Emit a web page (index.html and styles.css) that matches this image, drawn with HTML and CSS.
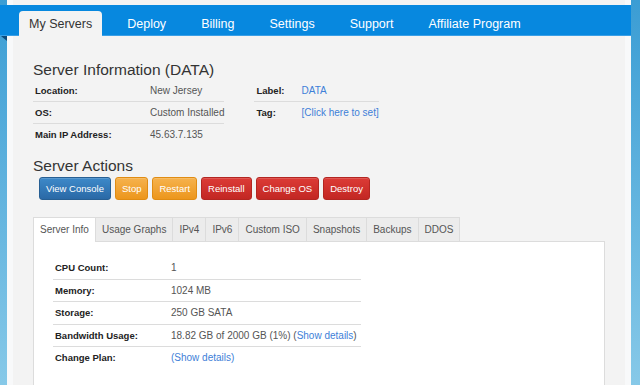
FILE: index.html
```html
<!DOCTYPE html>
<html lang="en">
<head>
    <meta charset="UTF-8">
    <title>My Servers</title>
    <link rel="stylesheet" href="styles.css">
</head>
<body>
<div class="panel">
    <div class="nav">
        <ul class="nav-list">
            <li class="nav-item nav-item-active">My Servers</li>
            <li class="nav-item">Deploy</li>
            <li class="nav-item">Billing</li>
            <li class="nav-item">Settings</li>
            <li class="nav-item">Support</li>
            <li class="nav-item">Affiliate Program</li>
        </ul>
    </div>
    <div class="main">
        <h2 class="section-title">Server Information (DATA)</h2>
        <div class="info">
            <table class="info-table">
                <tr><td class="label">Location:</td><td class="value">New Jersey</td></tr>
                <tr><td class="label">OS:</td><td class="value">Custom Installed</td></tr>
                <tr><td class="label">Main IP Address:</td><td class="value">45.63.7.135</td></tr>
            </table>
            <table class="info-table info-table-right">
                <tr><td class="label">Label:</td><td class="value"><a class="link">DATA</a></td></tr>
                <tr><td class="label">Tag:</td><td class="value"><a class="link">[Click here to set]</a></td></tr>
            </table>
        </div>

        <h2 class="section-title section-title-actions">Server Actions</h2>
        <div class="actions">
            <button class="btn btn-primary">View Console</button>
            <button class="btn btn-warning">Stop</button>
            <button class="btn btn-warning">Restart</button>
            <button class="btn btn-danger">Reinstall</button>
            <button class="btn btn-danger">Change OS</button>
            <button class="btn btn-danger">Destroy</button>
        </div>

        <ul class="tabs">
            <li class="tab tab-active">Server Info</li>
            <li class="tab">Usage Graphs</li>
            <li class="tab">IPv4</li>
            <li class="tab">IPv6</li>
            <li class="tab">Custom ISO</li>
            <li class="tab">Snapshots</li>
            <li class="tab">Backups</li>
            <li class="tab">DDOS</li>
        </ul>
        <div class="tab-content">
            <table class="detail-table">
                <tr><td class="label">CPU Count:</td><td class="value">1</td></tr>
                <tr><td class="label">Memory:</td><td class="value">1024 MB</td></tr>
                <tr><td class="label">Storage:</td><td class="value">250 GB SATA</td></tr>
                <tr><td class="label">Bandwidth Usage:</td><td class="value">18.82 GB of 2000 GB (1%) (<a class="link">Show details</a>)</td></tr>
                <tr><td class="label">Change Plan:</td><td class="value"><a class="link">(Show details)</a></td></tr>
            </table>
        </div>
    </div>
</div>
</body>
</html>
```

FILE: styles.css
```css
html, body {
    margin: 0;
    padding: 0;
}
body {
    min-height: 385px;
    background: linear-gradient(#3b9dd4, #8ecdea);
    font-family: "Liberation Sans", Arial, sans-serif;
    color: #333;
}

.panel {
    margin: 0 9px 0 7px;
    padding-top: 5px;
    min-height: 380px;
    background: #f3f3f3;
    border-left: 6px solid #f8f9fa;
    border-right: 6px solid #f8f9fa;
}

/* top menu */
.nav {
    position: relative;
    height: 31px;
    margin: 0 -6px 0 -13px;
    padding-left: 19px;
    background: #0788df;
    box-shadow: inset 0 -1px 0 #3a9fe6;
}
.nav::before {
    content: "";
    position: absolute;
    left: 1px;
    top: 31px;
    width: 0;
    height: 0;
    border-top: 5px solid #0c4a7a;
    border-left: 6px solid transparent;
}
.nav-list {
    display: flex;
    align-items: flex-end;
    height: 31px;
    margin: 0;
    padding: 0;
    list-style: none;
}
.nav-item {
    height: 25px;
    line-height: 26px;
    padding: 0 10px;
    margin-right: 15px;
    font-size: 12.5px;
    color: #fff;
}
.nav-item-active {
    background: #f3f3f3;
    color: #333;
    border-radius: 4px 4px 0 0;
}

.main {
    padding: 0 20px;
}
.section-title {
    margin: 24px 0 0;
    font-size: 15.5px;
    line-height: 20px;
    font-weight: normal;
    color: #333;
}
.section-title-actions {
    margin-top: 11px;
}

/* info tables */
.info {
    display: flex;
    align-items: flex-start;
}
.info-table,
.detail-table {
    border-collapse: collapse;
    font-size: 10px;
}
.info-table {
    width: 189px;
}
.info-table-right {
    width: 123px;
    margin-left: 30px;
}
.info-table td,
.detail-table td {
    height: 21px;
    padding: 0 0 0 2px;
    white-space: nowrap;
}
.info-table tr + tr td,
.detail-table tr + tr td {
    border-top: 1px solid #dcdcdc;
}
.info-table .label {
    width: 113px;
    min-width: 113px;
}
.info-table-right .label {
    width: 43px;
    min-width: 43px;
}
.label {
    font-weight: bold;
    font-size: 9.5px;
    color: #222;
}
.value {
    color: #555;
}
.link {
    color: #3e80d8;
    cursor: pointer;
}

/* action buttons */
.actions {
    display: flex;
    gap: 4px;
    margin-top: 1px;
    padding-left: 6px;
}
.btn {
    height: 23px;
    padding: 0 6px;
    font-family: "Liberation Sans", Arial, sans-serif;
    font-size: 9.5px;
    color: #fff;
    border-radius: 3px;
    border: 1px solid;
    box-shadow: inset 0 1px 0 rgba(255, 255, 255, 0.15);
}
.btn-primary {
    background: linear-gradient(#3d89c9, #2a69a6);
    border-color: #275f93;
}
.btn-warning {
    background: linear-gradient(#f6b24d, #ec961c);
    border-color: #e08c13;
}
.btn-danger {
    background: linear-gradient(#dc3b36, #c22723);
    border-color: #b32621;
}

/* tabs */
.tabs {
    display: flex;
    margin: 17px 0 0;
    padding: 0;
    list-style: none;
}
.tab {
    height: 23px;
    line-height: 24px;
    padding: 0 6px;
    font-size: 10px;
    color: #555;
    background: #ececec;
    border: 1px solid #dcdcdc;
    border-left: none;
    border-bottom: none;
}
.tab:first-child {
    border-left: 1px solid #dcdcdc;
}
.tab-active {
    background: #fff;
    position: relative;
    margin-bottom: -1px;
    height: 24px;
}
.tab-content {
    width: 532px;
    min-height: 150px;
    padding: 15px 19px;
    background: #fff;
    border: 1px solid #dcdcdc;
}
.detail-table {
    width: 308px;
}
.detail-table .label {
    width: 114px;
    min-width: 114px;
}
.detail-table td {
    height: 21.5px;
}
```
